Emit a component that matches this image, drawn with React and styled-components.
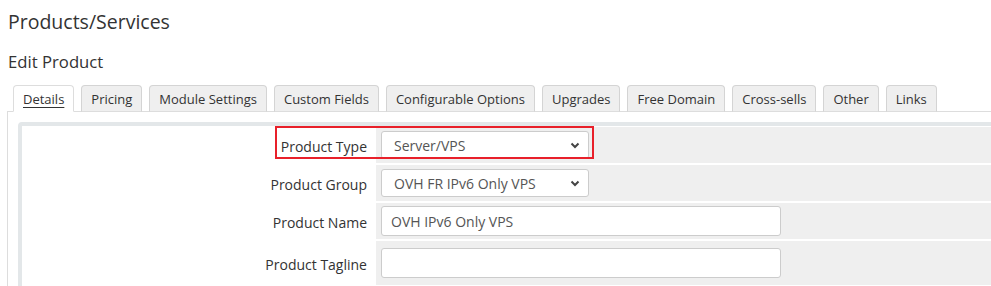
import styled, { createGlobalStyle } from 'styled-components';

const GlobalStyle = createGlobalStyle`
    body {
        margin: 0;
        overflow: hidden;
        background: #fff;
        font-family: "Open Sans", "Liberation Sans", sans-serif;
        color: #333;
    }
`

const Page = styled.div`
    width: 1010px;
    padding: 0 0 0 7px;
`

const Title = styled.h1`
    margin: 0;
    padding: 8px 0 0 1px;
    font-size: 19.5px;
    font-weight: 400;
    line-height: 27px;
    color: #333;
`

const SubTitle = styled.h2`
    margin: 0;
    padding: 15px 0 0 1px;
    font-size: 16.7px;
    font-weight: 400;
    line-height: 24px;
    color: #333;
`

const TabBar = styled.ul`
    list-style: none;
    margin: 11px 0 0;
    padding: 0 0 0 6px;
    display: flex;
    gap: 7px;
    border-bottom: 1px solid #ddd;
`

const Tab = styled.li`
    height: 25px;
    margin-bottom: -1px;
    padding: 0 9px;
    display: flex;
    align-items: center;
    font-size: 13px;
    color: #333;
    border: 1px solid ${props => props.active ? '#ddd' : '#d4d4d4'};
    border-bottom-color: ${props => props.active ? '#fff' : '#ddd'};
    border-radius: 4px 4px 0 0;
    background: ${props => props.active ? '#fff' : '#efefef'};
    text-decoration: ${props => props.active ? 'underline' : 'none'};
    text-underline-offset: 3px;
    cursor: pointer;
`

const TabContent = styled.div`
    border-left: 1px solid #ddd;
    padding: 10px 0 0 10px;
`

const FormTable = styled.div`
    position: relative;
    border: 4px solid #e3e7e9;
    border-radius: 4px;
    padding: 1px;
    display: grid;
    grid-template-columns: 351px 1fr;
    grid-template-rows: 36px 36px 36px 44px 36px;
    gap: 2px;
`

const Label = styled.div`
    display: flex;
    align-items: center;
    justify-content: flex-end;
    padding: 2px 7px 0 0;
    font-size: 14px;
    color: #333;
    background: #fff;
`

const Field = styled.div`
    display: flex;
    align-items: center;
    padding-left: 5px;
    background: #efefef;
`

const SelectBox = styled.div`
    box-sizing: border-box;
    width: 208px;
    height: 28px;
    padding: 0 8px 0 12px;
    display: flex;
    align-items: center;
    justify-content: space-between;
    background: #fff;
    border: 1px solid #ccc;
    border-radius: 3px;
    font-size: 14px;
    color: #555;
`

const TextInput = styled.input`
    box-sizing: border-box;
    width: 400px;
    height: 30px;
    padding: 0 9px;
    background: #fff;
    border: 1px solid #ccc;
    border-radius: 3px;
    font-family: inherit;
    font-size: 14px;
    color: #555;
    outline: none;
`

const Highlight = styled.div`
    position: absolute;
    left: 253px;
    top: 0;
    width: 319px;
    height: 33px;
    box-sizing: border-box;
    border: 2px solid #e8202a;
    pointer-events: none;
`

const Chevron = () => (
    <svg width="10" height="7" viewBox="0 0 10 7">
        <polyline points="1.5,1.5 5,5 8.5,1.5" fill="none" stroke="#444" strokeWidth="2" />
    </svg>
)

const tabs = ['Details', 'Pricing', 'Module Settings', 'Custom Fields', 'Configurable Options', 'Upgrades', 'Free Domain', 'Cross-sells', 'Other', 'Links'];

export default function App() {
    return (
        <Page>
            <GlobalStyle />
            <Title>Products/Services</Title>
            <SubTitle>Edit Product</SubTitle>
            <TabBar>
                {tabs.map((t, id) => <Tab key={id} active={id === 0}>{t}</Tab>)}
            </TabBar>
            <TabContent>
                <FormTable>
                    <Label>Product Type</Label>
                    <Field><SelectBox>Server/VPS<Chevron /></SelectBox></Field>
                    <Label>Product Group</Label>
                    <Field><SelectBox>OVH FR IPv6 Only VPS<Chevron /></SelectBox></Field>
                    <Label>Product Name</Label>
                    <Field><TextInput defaultValue='OVH IPv6 Only VPS' /></Field>
                    <Label>Product Tagline</Label>
                    <Field><TextInput defaultValue='' /></Field>
                    <Label />
                    <Field />
                    <Highlight />
                </FormTable>
            </TabContent>
        </Page>
    );
}
